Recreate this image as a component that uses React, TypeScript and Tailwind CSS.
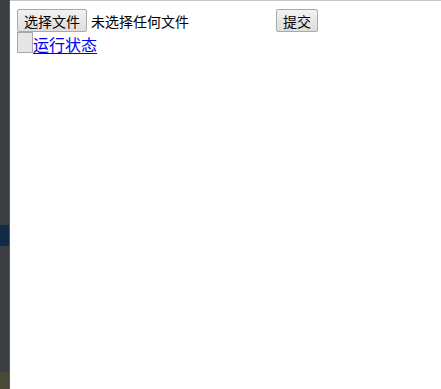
export default function App() {
  return (
    <div className="flex h-[389px] w-[441px] overflow-hidden bg-white font-['Noto_Sans_CJK_SC','Microsoft_YaHei',sans-serif] text-[14px] leading-none text-black">
      <div className="flex w-[10px] shrink-0 flex-col border-r border-[#55585a] bg-[#3c3f41]">
        <div className="h-[225px]" />
        <div className="h-[21px] bg-[#0f2b45]" />
        <div className="flex-1" />
        <div className="h-[17px] bg-[#4a4838]" />
      </div>

      <div className="flex-1 border-t border-[#c4c4c4] pl-[7px] pt-[8px]">
        <form className="flex items-center">
          <button
            type="button"
            className="h-[23px] w-[70px] rounded-[2px] border border-[#a9a9a9] bg-gradient-to-b from-[#f2f2f2] to-[#dddddd] text-[14px] leading-none"
          >
            选择文件
          </button>
          <span className="ml-[4px]">未选择任何文件</span>
          <button
            type="submit"
            className="ml-[87px] h-[23px] w-[42px] rounded-[2px] border border-[#a9a9a9] bg-gradient-to-b from-[#f2f2f2] to-[#dddddd] text-[14px] leading-none"
          >
            提交
          </button>
        </form>

        <div className="flex items-end">
          <div className="h-[21px] w-[16px] border border-[#a9a9a9] bg-[#e6e6e6]" />
          <a href="#" className="text-[16px] leading-[18px] text-[#0000ee] underline underline-offset-2">
            运行状态
          </a>
        </div>
      </div>
    </div>
  );
}
